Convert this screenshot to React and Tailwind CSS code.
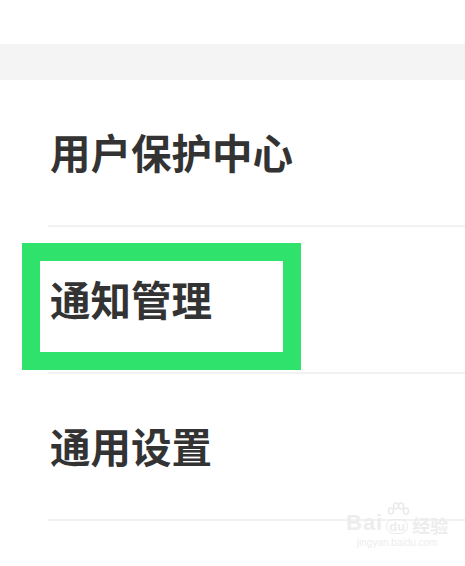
import React from 'react';

const items = ['用户保护中心', '通知管理', '通用设置'];

function Watermark() {
  return (
    <div className="absolute left-[346px] top-[512px] flex flex-col items-center text-[#ededed] select-none">
      <div className="flex items-end leading-none">
        <span className="text-[22px] font-bold tracking-[1px]" style={{ fontFamily: '"Liberation Sans", sans-serif' }}>Bai</span>
        <span className="relative ml-[2px] flex h-[20px] w-[24px] items-end justify-center">
          <svg className="absolute left-[1px] top-[-12px]" width="24" height="16" viewBox="0 0 24 16" fill="none" stroke="#eaeaea" strokeWidth="1.5">
            <ellipse cx="5" cy="9" rx="2.5" ry="3" />
            <ellipse cx="10" cy="4" rx="2.5" ry="3" />
            <ellipse cx="15" cy="4" rx="2.5" ry="3" />
            <ellipse cx="20" cy="9" rx="2.5" ry="3" />
          </svg>
          <span className="rounded-[8px] border-[1.5px] border-[#eaeaea] px-[2px] text-[13px] font-bold" style={{ fontFamily: '"Liberation Sans", sans-serif' }}>du</span>
        </span>
        <span className="ml-[3px] text-[18px] font-bold" style={{ fontFamily: '"Noto Sans CJK SC", sans-serif' }}>经验</span>
      </div>
      <span className="mt-[4px] text-[10px] leading-none" style={{ fontFamily: '"Liberation Sans", sans-serif' }}>jingyan.baidu.com</span>
    </div>
  );
}

export default function App() {
  return (
    <div
      className="relative h-[566px] w-[465px] overflow-hidden bg-white text-[#333333]"
      style={{ fontFamily: '"Noto Sans CJK SC", "Noto Sans", sans-serif' }}
    >
      <div className="h-[44px] bg-white" />
      <div className="h-[36px] bg-[#f4f4f4]" />
      {items.map((label) => (
        <div
          key={label}
          className="ml-[48px] flex h-[147px] items-center border-b-2 border-[#f2f2f2] pl-[2px] text-[40.5px] font-bold leading-none"
        >
          {label}
        </div>
      ))}

      <div className="absolute left-[22px] top-[243px] h-[127px] w-[279px] border-[18px] border-[#2fe26b]" />

      <Watermark />
    </div>
  );
}
